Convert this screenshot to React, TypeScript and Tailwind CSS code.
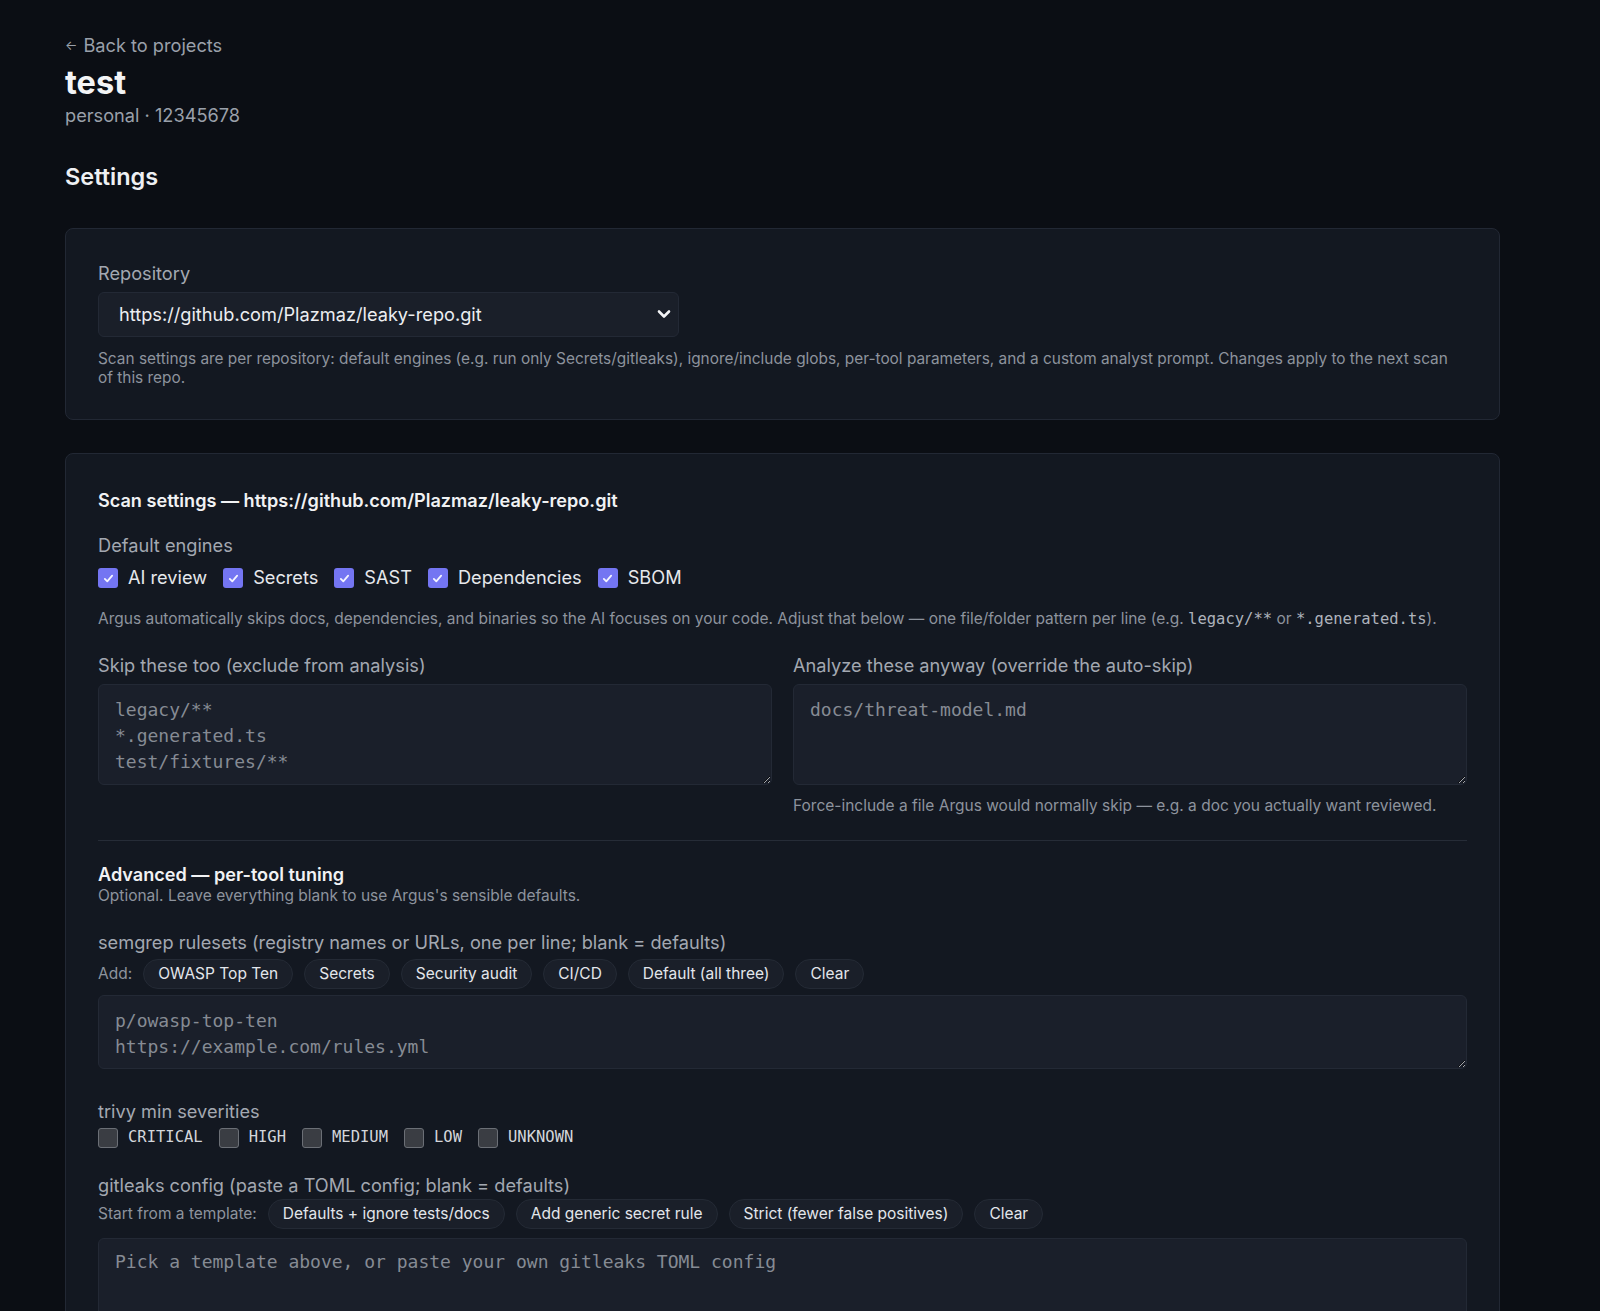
import React from 'react';

const engines = ['AI review', 'Secrets', 'SAST', 'Dependencies', 'SBOM'];
const severities = ['CRITICAL', 'HIGH', 'MEDIUM', 'LOW', 'UNKNOWN'];
const semgrepChips = ['OWASP Top Ten', 'Secrets', 'Security audit', 'CI/CD', 'Default (all three)', 'Clear'];
const gitleaksChips = ['Defaults + ignore tests/docs', 'Add generic secret rule', 'Strict (fewer false positives)', 'Clear'];

const MONO = { fontFamily: '"DejaVu Sans Mono", "Liberation Mono", monospace' };

const CheckBox = ({ checked }: { checked: boolean }) =>
  checked ? (
    <span className="flex h-5 w-5 shrink-0 items-center justify-center rounded-[3px] bg-[#7475f2]">
      <svg width="13" height="13" viewBox="0 0 16 16" fill="none">
        <path d="M3.5 8.5l3 3 6-7" stroke="#f4f4ff" strokeWidth="2.2" strokeLinecap="round" strokeLinejoin="round" />
      </svg>
    </span>
  ) : (
    <span className="h-5 w-5 shrink-0 rounded-[3px] border border-[#6b6f76] bg-[#3a3d43]" />
  );

const Chip = ({ label }: { label: string }) => (
  <button className="h-[30px] rounded-full border border-[#242a35] bg-[#1a1f29] px-[14px] text-[15.5px] text-[#e3e6eb]">
    {label}
  </button>
);

const Code = ({ children }: { children: React.ReactNode }) => (
  <code className="text-[15.5px] text-[#aeb3bc]" style={MONO}>
    {children}
  </code>
);

const taClass =
  'block w-full rounded-md border border-[#232935] bg-[#1a1f2a] px-4 pt-3 text-[18px] leading-[26px] text-[#d1d5db] outline-none placeholder:text-[#868b94]';

export default function App() {
  return (
    <div
      className="min-h-screen bg-[#0b0e14] text-[#e5e7eb] [color-scheme:dark]"
      style={{ fontFamily: 'Inter, "Noto Sans", sans-serif' }}
    >
      <div className="w-[1500px] pl-[65px] pt-[34px] pb-10">
        <a className="flex h-6 items-center gap-[6px] text-[18.2px] text-[#9aa0aa]">
          <span className="text-[13px]">←</span> Back to projects
        </a>
        <h1 className="mt-[7px] text-[32.5px] font-bold leading-9 text-[#f3f4f6]">test</h1>
        <div className="mt-[2px] text-[18.2px] leading-6 text-[#9aa0aa]">personal · 12345678</div>
        <h2 className="mt-[35px] text-[23.5px] font-semibold leading-[30px] text-[#eef0f3]">Settings</h2>

        {/* Repository picker */}
        <section className="mt-[36px] rounded-lg border border-[#222834] bg-[#131821] p-8">
          <div className="text-[18.2px] leading-6 text-[#a3a8b1]">Repository</div>
          <div className="relative mt-[7px] w-[581px]">
            <select className="h-[45px] w-full appearance-none rounded-md border border-[#232935] bg-[#1a1f29] pl-5 text-[18.2px] text-[#eceef1] outline-none">
              <option>https://github.com/Plazmaz/leaky-repo.git</option>
            </select>
            <svg
              className="pointer-events-none absolute right-[8px] top-[16px]"
              width="14"
              height="12"
              viewBox="0 0 14 12"
              fill="none"
            >
              <path d="M2 3.5l5 5 5-5" stroke="#f3f4f6" strokeWidth="2.6" strokeLinecap="round" strokeLinejoin="round" />
            </svg>
          </div>
          <p className="mt-[12px] text-[15.4px] leading-[19px] text-[#8d939d]">
            Scan settings are per repository: default engines (e.g. run only Secrets/gitleaks), ignore/include globs,
            per-tool parameters, and a custom analyst prompt. Changes apply to the next scan of this repo.
          </p>
        </section>

        {/* Scan settings */}
        <section className="mt-[33px] rounded-lg border border-[#222834] bg-[#131821] p-8">
          <h3 className="text-[18.1px] font-semibold leading-7 text-[#f1f2f4]">
            Scan settings — https://github.com/Plazmaz/leaky-repo.git
          </h3>

          <div className="mt-[19px] text-[18.2px] leading-6 text-[#a3a8b1]">Default engines</div>
          <div className="mt-[9px] flex h-6 items-center gap-4">
            {engines.map((e) => (
              <label key={e} className="flex items-center gap-[10px] text-[18.2px] text-[#e6e8ec]">
                <CheckBox checked />
                {e}
              </label>
            ))}
          </div>

          <p className="mt-[19px] text-[15.5px] leading-5 text-[#8d939d]">
            Argus automatically skips docs, dependencies, and binaries so the AI focuses on your code. Adjust that below
            — one file/folder pattern per line (e.g. <Code>legacy/**</Code> or <Code>*.generated.ts</Code>).
          </p>

          <div className="mt-[24px] grid grid-cols-2 gap-[21px]">
            <div>
              <div className="text-[18.2px] leading-6 text-[#a3a8b1]">Skip these too (exclude from analysis)</div>
              <textarea
                className={`mt-[7px] h-[101px] ${taClass}`}
                style={MONO}
                placeholder={'legacy/**\n*.generated.ts\ntest/fixtures/**'}
              />
            </div>
            <div>
              <div className="text-[18.2px] leading-6 text-[#a3a8b1]">Analyze these anyway (override the auto-skip)</div>
              <textarea className={`mt-[7px] h-[101px] ${taClass}`} style={MONO} placeholder="docs/threat-model.md" />
              <p className="mt-[11px] text-[15.5px] leading-5 text-[#8d939d]">
                Force-include a file Argus would normally skip — e.g. a doc you actually want reviewed.
              </p>
            </div>
          </div>

          <div className="mt-[24px] border-t border-[#262c37]" />

          <h4 className="mt-[21px] text-[18.1px] font-semibold leading-6 text-[#f1f2f4]">Advanced — per-tool tuning</h4>
          <p className="text-[15.5px] leading-5 text-[#8d939d]">Optional. Leave everything blank to use Argus's sensible defaults.</p>

          <div className="mt-[24px] text-[18.2px] leading-6 text-[#a3a8b1]">
            semgrep rulesets (registry names or URLs, one per line; blank = defaults)
          </div>
          <div className="mt-[5px] flex items-center gap-[11px]">
            <span className="text-[15.5px] text-[#8d939d]">Add:</span>
            {semgrepChips.map((c) => (
              <Chip key={c} label={c} />
            ))}
          </div>
          <textarea
            className={`mt-[6px] h-[74px] ${taClass}`}
            style={MONO}
            placeholder={'p/owasp-top-ten\nhttps://example.com/rules.yml'}
          />

          <div className="mt-[30px] text-[18.2px] leading-6 text-[#a3a8b1]">trivy min severities</div>
          <div className="mt-[3px] flex h-6 items-center gap-4">
            {severities.map((s) => (
              <label key={s} className="flex items-center gap-[10px] text-[15.5px] text-[#d3d6db]" style={MONO}>
                <CheckBox checked={false} />
                {s}
              </label>
            ))}
          </div>

          <div className="mt-[23px] text-[18.2px] leading-6 text-[#a3a8b1]">
            gitleaks config (paste a TOML config; blank = defaults)
          </div>
          <div className="mt-[2px] flex items-center gap-[11px]">
            <span className="text-[15.5px] text-[#8d939d]">Start from a template:</span>
            {gitleaksChips.map((c) => (
              <Chip key={c} label={c} />
            ))}
          </div>
          <textarea
            className={`mt-[9px] h-[180px] ${taClass} pt-[10px]`}
            style={MONO}
            placeholder="Pick a template above, or paste your own gitleaks TOML config"
          />
        </section>
      </div>
    </div>
  );
}
